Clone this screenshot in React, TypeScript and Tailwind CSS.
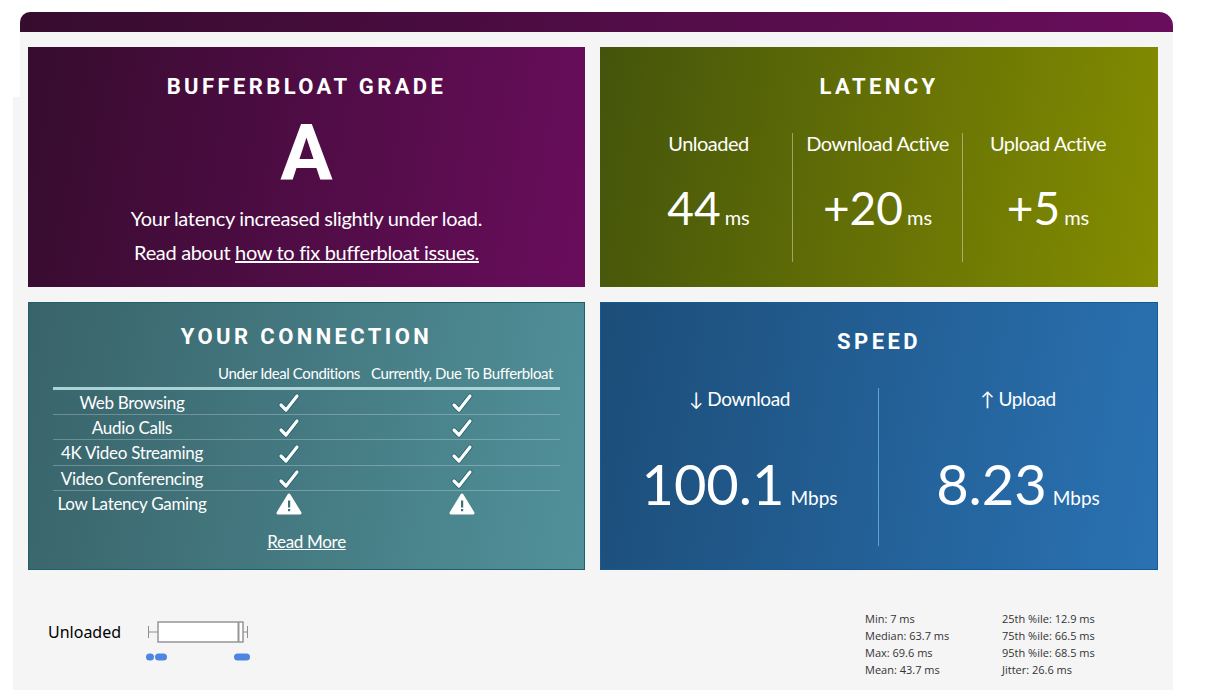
import React from 'react';

const titleClass =
  "text-center font-['Roboto',sans-serif] text-[22px] font-bold tracking-[3.4px] text-white";
const bodyFont = "font-['Lato',sans-serif]";

const Check = () => (
  <svg width="22" height="21" viewBox="0 0 22 21" className="mx-auto translate-y-px">
    <polyline points="3,12 8,17 19,3" fill="none" stroke="#1f5f68" strokeWidth="4.6" strokeLinecap="round" strokeLinejoin="round" />
    <polyline points="3,12 8,17 19,3" fill="none" stroke="#ffffff" strokeWidth="3.2" strokeLinecap="round" strokeLinejoin="round" />
  </svg>
);

const Warn = () => (
  <svg width="26" height="22" viewBox="0 0 26 22" className="mx-auto">
    <path d="M13 2 L24 20 L2 20 Z" fill="#ffffff" stroke="#ffffff" strokeWidth="3" strokeLinejoin="round" />
    <rect x="12" y="7.5" width="2.2" height="7" fill="#3e6f76" />
    <rect x="12" y="16" width="2.2" height="2.2" fill="#3e6f76" />
  </svg>
);

const connectionRows = [
  { label: 'Web Browsing', warn: false },
  { label: 'Audio Calls', warn: false },
  { label: '4K Video Streaming', warn: false },
  { label: 'Video Conferencing', warn: false },
  { label: 'Low Latency Gaming', warn: true },
];

const latencyCols = [
  { label: 'Unloaded', value: '44' },
  { label: 'Download Active', value: '+20' },
  { label: 'Upload Active', value: '+5' },
];

const speedCols = [
  { label: '↓ Download', value: '100.1' },
  { label: '↑ Upload', value: '8.23' },
];

const BoxPlot = () => (
  <svg width="110" height="50" viewBox="0 0 110 50" className="mt-[10px] block">
    <g stroke="#8f8f8f" strokeWidth="1" fill="none">
      <line x1="4.5" y1="6" x2="4.5" y2="18" />
      <line x1="4.5" y1="12" x2="14" y2="12" />
      <line x1="103.5" y1="6" x2="103.5" y2="18" />
      <line x1="99" y1="12" x2="103.5" y2="12" />
    </g>
    <rect x="14" y="2" width="85" height="20" fill="#ffffff" stroke="#969696" strokeWidth="1.5" />
    <line x1="94.5" y1="2" x2="94.5" y2="22" stroke="#969696" strokeWidth="2" />
    <g fill="#4d86e0">
      <rect x="2" y="33.5" width="8" height="7" rx="3.5" />
      <rect x="11" y="33.5" width="12" height="7" rx="3.5" />
      <rect x="90" y="33.5" width="16" height="7" rx="3.5" />
    </g>
  </svg>
);

export default function App() {
  return (
    <div className="h-[690px] overflow-hidden bg-white pt-3">
      <div className="ml-5 h-5 w-[1153px] rounded-tl-[10px] rounded-tr-[14px] bg-[linear-gradient(100deg,#360c2e,#690d5c)]" />
      <div className="relative ml-[13px] h-[658px] w-[1160px] bg-[#f5f5f5] pl-[15px] pt-[15px]">
        <div className="absolute left-0 top-0 h-[65px] w-[7px] bg-white" />

        <div className="relative grid grid-cols-[557px_558px] grid-rows-[240px_268px] gap-[15px]">
          {/* Bufferbloat grade */}
          <section className={`flex flex-col items-center bg-[linear-gradient(100deg,#360c2e,#690d5c)] pt-[23px] text-white ${bodyFont}`}>
            <h2 className={titleClass}>BUFFERBLOAT GRADE</h2>
            <div className="mt-[11px] font-['Roboto',sans-serif] text-[78px] font-bold leading-[80px]">A</div>
            <p className="mt-[7px] text-[20px] leading-[34px] tracking-[-0.33px]">Your latency increased slightly under load.</p>
            <p className="text-[20px] leading-[34px] tracking-[-0.33px]">
              Read about <a href="#" className="underline">how to fix bufferbloat issues.</a>
            </p>
          </section>

          {/* Latency */}
          <section className={`flex flex-col bg-[linear-gradient(100deg,#44540b,#858d00)] px-[25px] pt-[23px] text-white ${bodyFont}`}>
            <h2 className={titleClass}>LATENCY</h2>
            <div className="mt-[30px] grid h-[129px] grid-cols-[168px_170px_170px]">
              {latencyCols.map((col, i) => (
                <div key={col.label} className={`text-center ${i < 2 ? 'border-r border-white/40' : ''}`}>
                  <div className="-mt-[2px] text-[20px] leading-6 tracking-[-0.5px]">{col.label}</div>
                  <div className="mt-[23px] whitespace-nowrap text-[46px] leading-[60px]">
                    {col.value}
                    <span className="ml-[4px] text-[20px]">ms</span>
                  </div>
                </div>
              ))}
            </div>
          </section>

          {/* Your connection */}
          <section className={`border border-[#1f5f68] bg-[linear-gradient(100deg,#39636a,#51919a)] pl-6 pt-[17px] text-white ${bodyFont}`}>
            <h2 className={`${titleClass} -ml-6`}>YOUR CONNECTION</h2>
            <div className="mt-[10px] w-[507px]">
              <div className="grid h-[27px] grid-cols-[158px_156px_190px] border-b-[3px] border-[#a9d3d6] text-center text-[15px] leading-[20px] tracking-[-0.4px]">
                <div />
                <div>Under Ideal Conditions</div>
                <div>Currently, Due To Bufferbloat</div>
              </div>
              {connectionRows.map((row, i) => (
                <div
                  key={row.label}
                  className={`grid h-[25.2px] grid-cols-[158px_156px_190px] items-center text-center text-[17px] tracking-[-0.3px] ${i < 4 ? 'border-b border-white/25' : ''}`}
                >
                  <div>{row.label}</div>
                  <div>{row.warn ? <Warn /> : <Check />}</div>
                  <div>{row.warn ? <Warn /> : <Check />}</div>
                </div>
              ))}
            </div>
            <a href="#" className="-ml-6 mt-[13px] block text-center text-[17px] underline tracking-[-0.3px]">Read More</a>
          </section>

          {/* Speed */}
          <section className={`flex flex-col border border-[#155a94] bg-[linear-gradient(100deg,#1c4d78,#2a72b3)] pt-[22px] text-white ${bodyFont}`}>
            <h2 className={titleClass}>SPEED</h2>
            <div className="mt-[30px] grid h-[158px] grid-cols-[278px_278px]">
              {speedCols.map((col, i) => (
                <div key={col.label} className={`text-center ${i === 0 ? 'border-r border-[#5da3d6]' : ''}`}>
                  <div className="-mt-px text-[19px] leading-6 tracking-[-0.4px]">{col.label}</div>
                  <div className="mt-[37px] whitespace-nowrap text-[56px] leading-[72px]">
                    {col.value}
                    <span className="ml-[6px] text-[19px]">Mbps</span>
                  </div>
                </div>
              ))}
            </div>
          </section>
        </div>

        {/* Unloaded stats */}
        <div className="relative mt-[40px] flex">
          <div className="ml-[20px] w-[96px] pt-[10px] font-['Noto_Sans',sans-serif] text-[16px] leading-6 text-black">Unloaded</div>
          <BoxPlot />
          <div className="ml-[611px] grid grid-cols-[137px_137px] font-['Open_Sans',sans-serif] text-[11px] leading-[17px] text-[#333]">
            <div>Min: 7 ms</div>
            <div>25th %ile: 12.9 ms</div>
            <div>Median: 63.7 ms</div>
            <div>75th %ile: 66.5 ms</div>
            <div>Max: 69.6 ms</div>
            <div>95th %ile: 68.5 ms</div>
            <div>Mean: 43.7 ms</div>
            <div>Jitter: 26.6 ms</div>
          </div>
        </div>
      </div>
    </div>
  );
}
